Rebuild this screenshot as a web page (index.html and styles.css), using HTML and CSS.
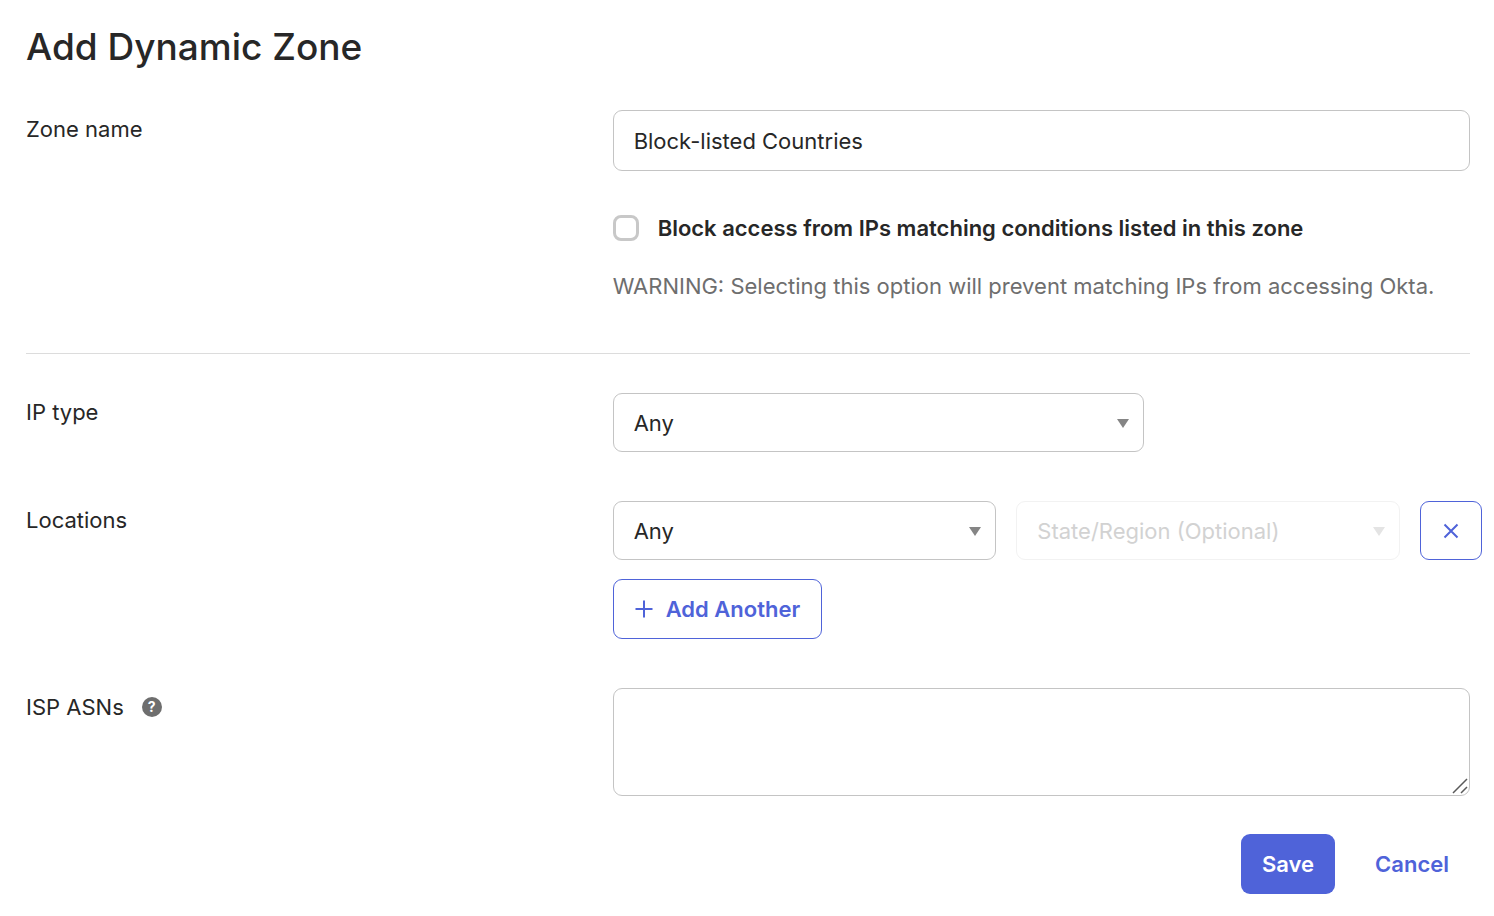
FILE: index.html
```
<!DOCTYPE html>
<html lang="en">
<head>
    <meta charset="UTF-8">
    <meta name="viewport" content="width=device-width, initial-scale=1.0">
    <title>Add Dynamic Zone</title>
    <link rel="stylesheet" href="styles.css">
</head>
<body>
    <form class="zone-form">
        <h1 class="title">Add Dynamic Zone</h1>

        <div class="row">
            <label class="label" for="zone-name">Zone name</label>
            <div class="field">
                <input class="control" type="text" id="zone-name" value="Block-listed Countries">
                <div class="check">
                    <input class="checkbox" type="checkbox" id="block-access">
                    <label for="block-access">Block access from IPs matching conditions listed in this zone</label>
                </div>
                <p class="warning">WARNING: Selecting this option will prevent matching IPs from accessing Okta.</p>
            </div>
        </div>

        <hr class="divider">

        <div class="row">
            <label class="label" for="ip-type">IP type</label>
            <div class="field">
                <div class="select ip-type">
                    <select class="control" id="ip-type">
                        <option>Any</option>
                    </select>
                </div>
            </div>
        </div>

        <div class="row">
            <label class="label" for="country">Locations</label>
            <div class="field">
                <div class="location">
                    <div class="select">
                        <select class="control" id="country">
                            <option>Any</option>
                        </select>
                    </div>
                    <div class="select disabled">
                        <select class="control" id="region" aria-label="State/Region" disabled>
                            <option>State/Region (Optional)</option>
                        </select>
                    </div>
                    <button type="button" class="button outline remove" aria-label="Remove location">
                        <svg width="16" height="16" viewBox="0 0 16 16" fill="none" stroke="currentColor" stroke-width="2">
                            <path d="M1.5 1.5l13 13M14.5 1.5l-13 13"/>
                        </svg>
                    </button>
                </div>
                <button type="button" class="button outline add">
                    <svg width="18" height="18" viewBox="0 0 18 18" fill="none" stroke="currentColor" stroke-width="2">
                        <path d="M9 0.5v17M0.5 9h17"/>
                    </svg>
                    Add Another
                </button>
            </div>
        </div>

        <div class="row">
            <div class="label">
                <label for="asns">ISP ASNs</label>
                <button type="button" class="help" aria-label="Help">?</button>
            </div>
            <div class="field">
                <div class="asns">
                    <textarea class="control" id="asns"></textarea>
                    <svg class="grip" width="16" height="16" viewBox="0 0 16 16" fill="none" stroke="#5a5a5a" stroke-width="1.5">
                        <path d="M1 15L15 1M9 15l6-6"/>
                    </svg>
                </div>
            </div>
        </div>

        <div class="actions">
            <button type="submit" class="button primary">Save</button>
            <button type="button" class="button link">Cancel</button>
        </div>
    </form>
</body>
</html>
```
FILE: styles.css
```
* {
    margin: 0;
    padding: 0;
    box-sizing: border-box;
}

body {
    font-family: Inter, "Liberation Sans", sans-serif;
    font-size: 22px;
    line-height: 38px;
    color: #272727;
    background: white;
}

input, select, textarea, button {
    font: inherit;
    color: inherit;
}

.zone-form {
    padding: 22px 24px 22px 26px;
}

.title {
    font-size: 37px;
    font-weight: 500;
    line-height: 50px;
    margin-bottom: 38px;
}

.row {
    display: grid;
    grid-template-columns: 13fr 19fr;
    margin-bottom: 49px;
}

.label {
    display: flex;
    align-items: center;
    align-self: start;
    gap: 18px;
}

.field {
    min-width: 0;
}

.control {
    display: block;
    width: 100%;
    height: 61px;
    padding: 0 20px;
    border: 1px solid #c4c4c4;
    border-radius: 9px;
    background: white;
}

.check {
    display: flex;
    align-items: center;
    gap: 19px;
    margin-top: 38px;
    font-weight: 600;
}

.checkbox {
    appearance: none;
    width: 26px;
    height: 26px;
    border: 3px solid #c8c8c8;
    border-radius: 8px;
}

.checkbox:checked {
    background: #4f63d9;
    border-color: #4f63d9;
}

.warning {
    margin-top: 20px;
    color: #6e6e6e;
}

.divider {
    border: none;
    border-top: 1px solid #dcdcdc;
    margin-top: -1px;
    margin-bottom: 39px;
}

.select {
    position: relative;
    flex: 1;
    min-width: 0;
}

.select .control {
    appearance: none;
    height: 59px;
}

/* dropdown arrow */
.select::after {
    content: "";
    position: absolute;
    right: 15px;
    top: 26px;
    border: 6px solid transparent;
    border-top: 9px solid #858585;
    border-bottom: none;
    pointer-events: none;
}

.select.disabled .control {
    color: #d2d2d2;
    border-color: #f2f2f2;
    opacity: 1;
}

.select.disabled::after {
    border-top-color: #e4e4e4;
}

.ip-type {
    width: 62%;
}

/* the remove button hangs past the right edge of the fields */
.location {
    display: flex;
    gap: 20px;
    margin-right: -12px;
    margin-bottom: 19px;
}

.button {
    display: inline-flex;
    align-items: center;
    justify-content: center;
    height: 60px;
    padding: 0 21px;
    border: none;
    border-radius: 9px;
    background: none;
    color: #4f63d9;
    font-weight: 600;
    cursor: pointer;
}

.button.outline {
    border: 1px solid #4f63d9;
}

.button.primary {
    background: #4f63d9;
    color: white;
}

.button.remove {
    width: 62px;
    height: 59px;
}

.add {
    gap: 13px;
}

.help {
    width: 20px;
    height: 20px;
    border: none;
    border-radius: 50%;
    background: #6e6e6e;
    color: white;
    font-size: 14px;
    font-weight: 700;
    line-height: 20px;
}

.asns {
    position: relative;
}

.asns .control {
    height: 108px;
    padding: 12px 20px;
    resize: vertical;
}

.asns .control::-webkit-resizer {
    background: none;
}

.grip {
    position: absolute;
    right: 2px;
    bottom: 2px;
    pointer-events: none;
}

.actions {
    display: flex;
    justify-content: flex-end;
    gap: 19px;
    margin-top: -11px;
}
```
